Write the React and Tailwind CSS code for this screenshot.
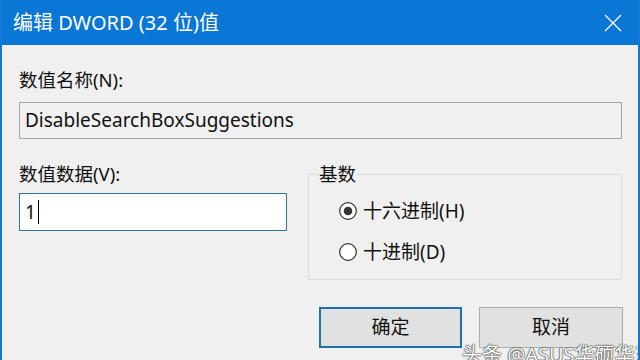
export default function App() {
  const font = { fontFamily: '"Noto Sans", "Noto Sans CJK SC", sans-serif' };
  return (
    <div
      className="relative w-[640px] h-[360px] overflow-hidden flex flex-col bg-[#f0f0f0] border-l-2 border-r-2 border-[#1479d6] text-[#111]"
      style={font}
    >
      <div className="h-[45px] shrink-0 bg-[#0a76d6] flex items-center justify-between pl-[11px] pr-[14px] text-white">
        <span className="text-[20px] leading-none">编辑 DWORD (32 位)值</span>
        <svg width="18" height="18" viewBox="0 0 18 18" className="mr-[2px]">
          <path d="M1 1 L17 17 M17 1 L1 17" stroke="#fff" strokeWidth="1.3" fill="none" />
        </svg>
      </div>

      <div className="flex flex-col pl-[17px] pr-[14px]">
        <div className="mt-[23px] h-[24px] text-[18.5px] leading-[24px]">数值名称(N):</div>
        <div className="mt-[10px] h-[37px] w-[603px] border border-[#a4a4a4] bg-[#f0f0f0] flex items-center pl-[5px] text-[19px]">
          DisableSearchBoxSuggestions
        </div>

        <div className="mt-[23px] flex">
          <div className="flex flex-col w-[268px]">
            <div className="h-[24px] text-[18.5px] leading-[24px]">数值数据(V):</div>
            <div className="mt-[7px] h-[38px] border border-[#2f74a3] bg-white flex items-center pl-[5px] text-[19px]">
              <span>1</span>
              <span className="ml-[2px] w-px h-[24px] bg-black" />
            </div>
          </div>

          <fieldset className="ml-[21px] w-[314px] h-[118px] border border-[#dcdcdc] rounded-[1px] m-0 pl-[29px] pr-0 pb-0 pt-0">
            <legend className="ml-[-20px] px-[1px] text-[18.5px] leading-[24px]">基数</legend>
            <div className="flex items-center h-[24px] mt-[13px]">
              <svg width="20" height="20" viewBox="0 0 20 20">
                <circle cx="10" cy="10" r="8.3" fill="#fff" stroke="#333" strokeWidth="1.2" />
                <circle cx="10" cy="10" r="4.3" fill="#333" />
              </svg>
              <span className="ml-[5px] text-[19px] leading-[24px]">十六进制(H)</span>
            </div>
            <div className="flex items-center h-[24px] mt-[17px]">
              <svg width="20" height="20" viewBox="0 0 20 20">
                <circle cx="10" cy="10" r="8.3" fill="#fff" stroke="#333" strokeWidth="1.2" />
              </svg>
              <span className="ml-[5px] text-[19px] leading-[24px]">十进制(D)</span>
            </div>
          </fieldset>
        </div>

        <div className="mt-[27px] flex justify-end gap-[17px] pr-[1px]">
          <button className="w-[143px] h-[41px] border-2 border-[#1b72ad] bg-[#e1e1e1] text-[19px]">确定</button>
          <button className="w-[144px] h-[41px] border border-[#adadad] bg-[#e1e1e1] text-[19px]">取消</button>
        </div>
      </div>

      <div
        className="absolute left-[460px] top-[343px] text-[20px] leading-[24px] text-white whitespace-nowrap"
        style={{ textShadow: '0 0 1px #333, 0 0 1px #333, 0 0 2px #555' }}
      >
        头条 @ASUS华硕华东
      </div>
    </div>
  );
}
